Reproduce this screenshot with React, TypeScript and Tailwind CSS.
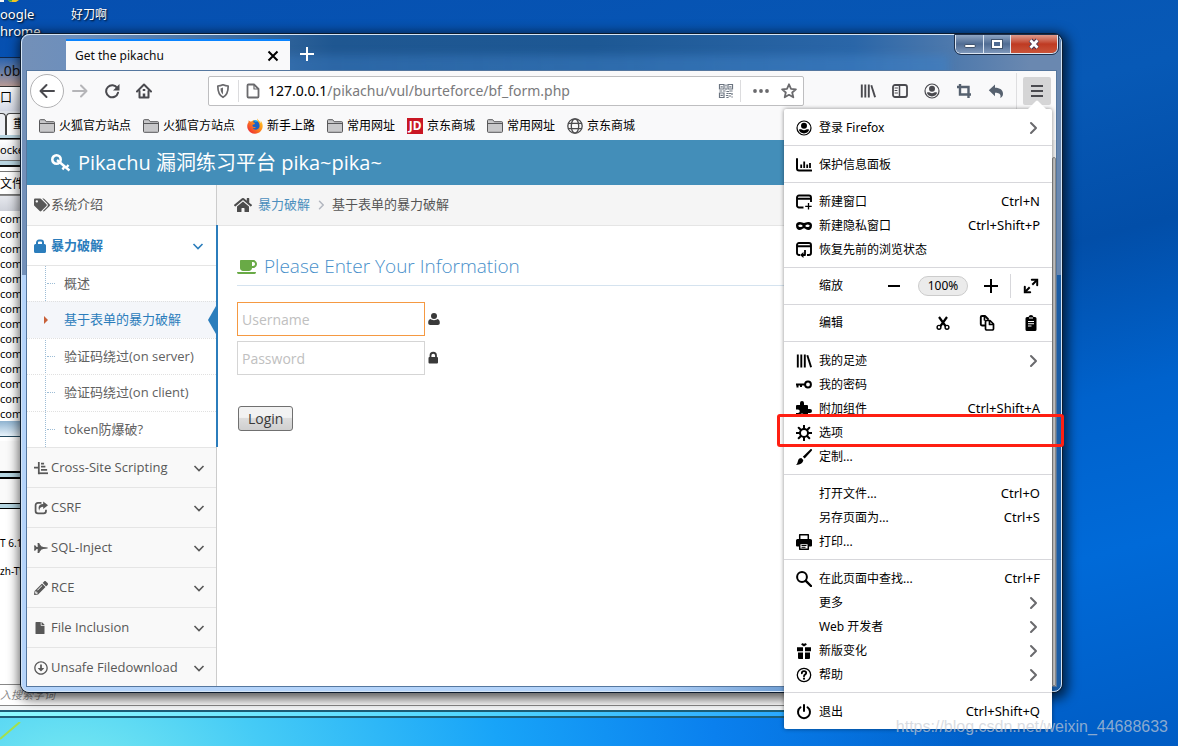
import React, { ReactNode } from "react";
import { FaCoffee, FaFighterJet, FaFile, FaHome, FaPencilAlt, FaRegArrowAltCircleDown, FaTags } from "react-icons/fa";

const UI = "font-['Noto_Sans','Noto_Sans_CJK_SC',sans-serif]";
const WEB = "font-['Open_Sans','Noto_Sans_CJK_SC',sans-serif]";

type IconProps = { children: ReactNode; className?: string };

function Icon({ children, className = "size-4" }: IconProps) {
  return (
    <svg viewBox="0 0 16 16" className={`shrink-0 ${className}`} fill="none" stroke="currentColor" strokeWidth="2" strokeLinecap="round" strokeLinejoin="round" aria-hidden="true">
      {children}
    </svg>
  );
}

const Account = ({ className }: { className?: string }) => (
  <Icon className={className}>
    <circle cx="8" cy="8" r="7" strokeWidth="1.2" />
    <circle cx="8" cy="5.8" r="3" fill="currentColor" stroke="none" />
    <path d="M2.8 9.8C4 9.2 5 9.3 5.8 9.6c1.3 1 3.1 1 4.4 0 .8-.3 1.8-.4 3 .2C12.400 12 10.500 13.400 8 13.400S3.600 12 2.800 9.800z" fill="currentColor" stroke="none" />
  </Icon>
);

const Library = ({ className }: { className?: string }) => (
  <Icon className={className}>
    <path d="M1.800 1.500v13M5.300 1.500v13M8.800 1.500v13" strokeLinecap="butt" strokeWidth="1.900" />
    <path d="M11.300 2.200l3.800 12" strokeLinecap="butt" strokeWidth="1.900" />
  </Icon>
);

const Chevron = ({ className = "size-4" }: { className?: string }) => (
  <Icon className={className}>
    <path d="M6 3l5 5-5 5" />
  </Icon>
);

const ChevronDown = () => (
  <Icon className="size-4">
    <path d="M3.500 6L8 10.500 12.500 6" strokeWidth="1.600" strokeLinecap="butt" strokeLinejoin="miter" />
  </Icon>
);

const Folder = () => (
  <svg viewBox="0 0 16 16" className="size-4 shrink-0" aria-hidden="true">
    <path d="M.5 13.500v-11a.8.8 0 0 1 .8-.8h4.400l1.500 2h7.500a.8.8 0 0 1 .8.8v9a.8.8 0 0 1-.8.8H1.300a.8.8 0 0 1-.8-.8z" fill="#c8c8ca" stroke="#58585a" />
    <path d="M1 5.500h14" stroke="#58585a" />
  </svg>
);

const FirefoxLogo = () => (
  <svg viewBox="0 0 16 16" className="size-4 shrink-0" aria-hidden="true">
    <defs>
      <linearGradient id="fx" x1="1" y1="0" x2="0" y2="1">
        <stop offset="0" stopColor="#ffd92e" />
        <stop offset=".4" stopColor="#ff9217" />
        <stop offset="1" stopColor="#e9173c" />
      </linearGradient>
    </defs>
    <circle cx="8" cy="8.500" r="6" fill="#1b62c4" />
    <path d="M6 2.400A6 6 0 0 1 12 4c-1-.6-2-.4-3 0z" fill="#20b4f0" />
    <path d="M1.800 2.300c-.4 1.200-.2 2-.2 2C.2 6-.2 8.500.8 11c1.200 3 4 4.700 7.200 4.700 4.300 0 7.700-3.300 7.700-7.700 0-2-.8-4.400-2.500-5.600.7 1.200 1 2 1 3C13 3.200 11 2.500 10.200.5c-.3 2 1 3.300 1.800 4.800 1 2 .7 4.200-.8 5.500-1.800 1.500-4.400 1-5.400-.7 1 .3 2.400 0 3.200-.8-.8-.5-1.400 0-2.300-.3-1-.3-1.500-1.300-1-2.200.3-.5 1.200-.3 1.600-.6.6-.6.7-1.200.7-1.200C7 4.600 6.300 4.500 6 4.300c.1-.8.6-1.500 1.300-2-1.300 0-2.400.6-3.100 1.500-.8-.2-1.700-.5-2.400-1.500z" fill="url(#fx)" />
  </svg>
);

const JDLogo = () => (
  <span className="flex size-4 shrink-0 items-center justify-center bg-[#c91623] text-xs font-bold text-white" aria-hidden="true">JD</span>
);

const Globe = () => (
  <Icon className="size-4 text-[#4c4c4e]">
    <g strokeWidth="1.300">
      <circle cx="8" cy="8" r="7.200" />
      <ellipse cx="8" cy="8" rx="3.700" ry="7.200" />
      <path d="M1.500 5.300h13M1.500 10.700h13" />
    </g>
  </Icon>
);

const bookmarks: { label: string; icon: ReactNode }[] = [
  { label: "火狐官方站点", icon: <Folder /> },
  { label: "火狐官方站点", icon: <Folder /> },
  { label: "新手上路", icon: <FirefoxLogo /> },
  { label: "常用网址", icon: <Folder /> },
  { label: "京东商城", icon: <JDLogo /> },
  { label: "常用网址", icon: <Folder /> },
  { label: "京东商城", icon: <Globe /> },
];

function BackgroundWindow() {
  return (
    <div className={`absolute bottom-7 left-0 right-[230px] top-[57px] flex flex-col overflow-hidden border-t border-[#10284c] bg-white text-xs text-black ${UI}`}>
      <div className="h-7 shrink-0 bg-linear-to-b from-[#2a63ad] via-[#6a7fa6] to-[#b99a94] text-sm leading-[26px] text-[#111]">.0be</div>
      <div className="h-[25px] shrink-0 border-t border-[#333] bg-linear-to-b from-white to-[#d5d9e6] leading-[22px]">口</div>
      <div className="flex h-6 shrink-0 items-end bg-[#dfe3ea]">
        <span className="h-[22px] w-1.5 rounded-tr border-r border-t border-[#444] bg-[#eef0f5]" />
        <span className="h-[22px] w-20 rounded-tl border-l border-t border-[#444] bg-white pl-1.5 pt-0.5">重</span>
      </div>
      <div className="h-1 shrink-0 border-b border-black bg-[#b8d4e0]" />
      <div className="h-[22px] shrink-0 border-y border-[#777] bg-linear-to-b from-white to-[#e2e4ea] text-[11px] leading-5">ocket</div>
      <div className="h-1.5 shrink-0 border-b-2 border-[#111] bg-[#b8d4e0]" />
      <div className="mt-1 h-6 shrink-0 border-y border-[#777] leading-6">文件</div>
      <div className="h-4 shrink-0 border-t border-[#888] bg-linear-to-b from-[#e6e8ee] to-[#cfd2da]" />
      <div className="shrink-0 text-[11px] leading-[15px]">
        {Array.from({ length: 14 }, (_, i) => (
          <div key={i}>com</div>
        ))}
      </div>
      <div className="h-4 shrink-0 border-b border-[#244a60] bg-linear-to-b from-[#8fb3d0] to-[#e9f4fc]" />
      <div className="mt-1 h-8 shrink-0 border-b-2 border-black bg-[#fafafa]" />
      <div className="h-1.5 shrink-0 border-b-2 border-black bg-[#b6d6e2]" />
      <div className="h-6 shrink-0 bg-[#fafafa]" />
      <div className="h-1.5 shrink-0 border-y border-black bg-[#b6d6e2]" />
      <div className="flex-1 overflow-hidden pt-5 text-[10px] leading-[28px]">
        <div>T 6.1</div>
        <div>zh-TW</div>
      </div>
      <div className="h-[22px] shrink-0 border-y border-[#888] text-[11px] italic leading-5 text-[#888]">入搜索字词</div>
      <div className="h-1 shrink-0 bg-[#f4f6f7]" />
      <div className="h-2 shrink-0 border-y-2 border-[#1c5e78] bg-linear-to-r from-[#8ffaff] via-[#52d6ff] to-[#1590ff]" />
    </div>
  );
}

function WindowControls() {
  return (
    <div className="flex h-[19px] overflow-hidden rounded-b-md border border-t-0 border-[#dbe6f3] outline outline-[#1c2f4c]">
      <button aria-label="最小化" className="flex w-7 items-center justify-center border-r border-[#dbe6f3] bg-linear-to-b from-[#8ea5c4] via-[#506c93] to-[#7f98bb]">
        <span className="mt-1 h-1 w-3 rounded-xs border border-[#41546f] bg-white" />
      </button>
      <button aria-label="最大化" className="flex w-[27px] items-center justify-center border-r border-[#dbe6f3] bg-linear-to-b from-[#8ea5c4] via-[#506c93] to-[#7f98bb]">
        <span className="h-2 w-2.5 border-2 border-white bg-[#506c93] outline outline-[#41546f]" />
      </button>
      <button aria-label="关闭" className="flex w-[46px] items-center justify-center bg-linear-to-b from-[#dd9a8c] via-[#bf3a22] to-[#c9543a]">
        <svg viewBox="0 0 12 12" className="size-3" aria-hidden="true">
          <path d="M2.500 2l7 8M9.500 2l-7 8" stroke="#4b3650" strokeWidth="4.800" />
          <path d="M2.500 2.300l7 7.400M9.500 2.300l-7 7.400" stroke="#fff" strokeWidth="2.800" />
        </svg>
      </button>
    </div>
  );
}

function TitleBar() {
  return (
    <div className="flex h-9 shrink-0 items-start">
      <div className="ml-11 mt-1 flex h-8 w-56 items-center justify-between border-t-2 border-[#0a84ff] bg-[#f9f9fa] pl-[9px] pr-[9px]">
        <span className="text-xs text-[#0c0c0d]">Get the pikachu</span>
        <button aria-label="关闭标签页">
          <Icon className="size-4 text-black">
            <path d="M3.500 3.500l9 9M12.500 3.500l-9 9" strokeLinecap="butt" />
          </Icon>
        </button>
      </div>
      <button aria-label="新建标签页" className="ml-[9px] mt-[11px] text-white">
        <Icon className="size-4">
          <path d="M8 1v14M1 8h14" strokeLinecap="butt" />
        </Icon>
      </button>
      <div className="ml-auto mr-[3px]">
        <WindowControls />
      </div>
    </div>
  );
}

function Toolbar() {
  return (
    <div className="flex h-10 shrink-0 items-center bg-[#f9f9fa] pl-[3px] pr-[5px] text-[#4a4a4f]">
      <button aria-label="后退" className="flex size-[34px] shrink-0 items-center justify-center rounded-full border border-[#b1b1b3] bg-white">
        <Icon className="size-4">
          <path d="M15 8H2M7.500 2L1.500 8l6 6" />
        </Icon>
      </button>
      <button aria-label="前进" className="ml-2 text-[#b5b5b8]">
        <Icon className="size-4">
          <path d="M1 8h13M9 2.500L14.500 8 9 13.500" />
        </Icon>
      </button>
      <button aria-label="重新载入" className="ml-4">
        <Icon className="size-4">
          <path d="M13.300 5.200A6 6 0 1 0 14 9.700" />
          <path d="M15.500 1v6.500H9z" fill="currentColor" stroke="none" />
        </Icon>
      </button>
      <button aria-label="主页" className="ml-4">
        <Icon className="size-4">
          <path d="M1 8.500L8 1.500l7 7" />
          <path d="M3.500 8v6.500h9V8" />
          <path d="M8 10.500v4M8 6v2" strokeWidth="2.500" strokeLinecap="butt" />
        </Icon>
      </button>
      <div className="ml-14 flex h-[30px] min-w-0 flex-1 items-center rounded-xs border border-[#bebec0] bg-white px-1.5 text-[#6a6a6d]">
        <Icon className="size-4">
          <path d="M8 1.800c2 .9 3.500 1.200 5.200 1.200 0 5-1 9.200-5.200 11.300C3.800 12.200 2.800 8 2.800 3 4.500 3 6 2.700 8 1.800z" strokeWidth="1.700" />
          <path d="M8 4.500v7c-1.700-1.300-2.500-3.500-2.500-6z" fill="currentColor" stroke="none" />
        </Icon>
        <span className="ml-[7px] h-[22px] w-px bg-[#dcdcde]" />
        <Icon className="ml-1.5 size-4">
          <path d="M2.500 2.500a1 1 0 0 1 1-1H9L13.500 6v7.500a1 1 0 0 1-1 1h-9a1 1 0 0 1-1-1z" strokeWidth="1.800" />
          <path d="M9 2v4h4" strokeWidth="1.200" />
        </Icon>
        <div className="ml-[7px] min-w-0 flex-1 truncate text-sm leading-5 text-[#7a7a7c]">
          <span className="text-black">127.0.0.1</span>/pikachu/vul/burteforce/bf_form.php
        </div>
        <Icon className="size-4 text-[#6b7480]">
          <g strokeWidth="1.200" strokeLinejoin="miter">
            <path d="M1.500 1.500h4.500V6H1.500zM10 1.500h4.500V6H10zM1.500 10H6v4.500H1.500z" />
            <path d="M3.200 3.800h1M11.800 3.800h1M3.200 12.300h1M8 2v1M8 5v1.500M2 8h1.500M5.500 8H7M9 8.500h1.500M12 8h2M9 10.500h1M11.500 10.500h1M14 10.500v1M8.500 12.500h1M11 13h1.500M14 14h.2M9 14.500h1" strokeLinecap="square" />
          </g>
        </Icon>
        <span className="ml-1.5 h-[22px] w-px bg-[#dcdcde]" />
        <Icon className="ml-3 size-4">
          <g fill="currentColor" stroke="none">
            <circle cx="2" cy="8" r="1.900" />
            <circle cx="8" cy="8" r="1.900" />
            <circle cx="14" cy="8" r="1.900" />
          </g>
        </Icon>
        <Icon className="ml-3 size-4">
          <path d="M8 1.300l2 4.500 4.900.5-3.700 3.200 1.100 4.800L8 11.800l-4.300 2.500 1.100-4.800L1.100 6.300 6 5.800z" strokeWidth="1.800" />
        </Icon>
      </div>
      <div className="ml-14 flex items-center gap-4">
        <Library />
        <Icon>
          <rect x="1" y="2" width="14" height="12" rx="2" strokeWidth="1.800" />
          <path d="M7.500 2v12" strokeWidth="1.500" />
          <path d="M3 5h2.500M3 7.500h2M3 10h2.500" strokeWidth="1" />
        </Icon>
        <Account />
        <Icon className="size-4 text-[#56616f]">
          <path d="M4 1v10.500h11M1 4h11.500v11" strokeWidth="2.400" strokeLinecap="butt" strokeLinejoin="miter" />
        </Icon>
        <Icon className="size-4 text-[#56616f]">
          <path d="M7 1.500v3.200c5 0 8 2.300 8 6 0 2-.9 3.500-2.700 4.300C13.300 12 12 9.800 7 9.800v3.400L.8 7.300z" fill="currentColor" stroke="none" />
        </Icon>
      </div>
      <span className="ml-3 h-9 w-px bg-[#dedee0]" />
      <button aria-label="打开菜单" className="ml-1.5 flex size-7 items-center justify-center rounded-xs bg-[#d5d5d6]">
        <Icon>
          <path d="M2 3h12M2 8h12M2 13h12" strokeLinecap="butt" />
        </Icon>
      </button>
    </div>
  );
}

function BookmarksBar() {
  return (
    <nav aria-label="书签" className="flex h-[29px] shrink-0 items-center gap-3 bg-[#f9f9fa] pl-3 text-xs text-black">
      {bookmarks.map((b, i) => (
        <a key={i} href="#" className="flex shrink-0 items-center gap-1">
          {b.icon}
          {b.label}
        </a>
      ))}
    </nav>
  );
}

const subItems = ["概述", "基于表单的暴力破解", "验证码绕过(on server)", "验证码绕过(on client)", "token防爆破?"];

const navItems: { label: string; icon: ReactNode }[] = [
  {
    label: "Cross-Site Scripting",
    icon: (
      <Icon className="size-3.5">
        <path d="M5.500 1v14M0 7.500h5M8 3h3.500M8 6.500h5M8 10h7" strokeLinecap="butt" />
        <path d="M5.500 14h10.500" strokeLinecap="butt" />
      </Icon>
    ),
  },
  {
    label: "CSRF",
    icon: (
      <Icon className="size-3.5">
        <path d="M8.500 2.200H4.500A2.700 2.700 0 0 0 1.800 5v6.500a2.700 2.700 0 0 0 2.700 2.700H11a2.700 2.700 0 0 0 2.700-2.700V10" strokeLinecap="butt" />
        <path d="M10.500.5L16 4.800l-5.500 4.300V6.500C8 6.500 6.500 7.500 6 11 4 6.500 6 3.300 10.500 3.300z" fill="currentColor" stroke="none" />
      </Icon>
    ),
  },
  { label: "SQL-Inject", icon: <FaFighterJet className="size-3.5" /> },
  { label: "RCE", icon: <FaPencilAlt className="size-3.5" /> },
  { label: "File Inclusion", icon: <FaFile className="size-3" /> },
  { label: "Unsafe Filedownload", icon: <FaRegArrowAltCircleDown className="size-3.5" /> },
];

function Sidebar() {
  return (
    <aside className="flex w-[190px] shrink-0 flex-col border-r border-[#ccc] bg-[#f2f2f2] text-[13px] text-[#585858]">
      <a href="#" className="flex h-10 shrink-0 items-center gap-px bg-[#f9f9f9] pl-[7px]">
        <FaTags className="size-4" />
        系统介绍
      </a>
      <div className="relative z-10 -mr-0.5 shrink-0 border-r-2 border-[#2b7dbc] bg-white">
        <a href="#" className="flex h-[41px] items-center gap-[3px] border-y border-[#e5e5e5] pl-[7px] pr-2.5 font-bold text-[#2b7dbc]">
          <svg viewBox="0 0 14 14" className="h-3.5 w-3.5" fill="currentColor" aria-hidden="true">
            <path d="M1.500 5h9a1.500 1.500 0 0 1 1.500 1.500v6A1.500 1.500 0 0 1 10.500 14h-9A1.500 1.500 0 0 1 0 12.500v-6A1.500 1.500 0 0 1 1.500 5z" />
            <path d="M3 6V3.500A2 2 0 0 1 5 1.500h2a2 2 0 0 1 2 2V6" fill="none" stroke="currentColor" strokeWidth="2" />
          </svg>
          <span className="flex-1">暴力破解</span>
          <ChevronDown />
        </a>
        <ul className="relative flex h-[181px] flex-col before:absolute before:inset-y-0 before:left-[18px] before:border-l before:border-dotted before:border-[#9dbdd6]">
          {subItems.map((label, i) => {
            const active = i === 1;
            return (
              <li key={label} className={`relative flex flex-1 items-center ${i > 0 ? "border-t border-dotted border-[#e0e0e0]" : ""} ${active ? "bg-[#f4f6fa] text-[#2b7dbc]" : "text-[#616161]"}`}>
                {active ? (
                  <>
                    <svg viewBox="0 0 4 8" className="absolute left-[17px] z-10 h-2 w-1" aria-hidden="true">
                      <path d="M0 0l4 4-4 4z" fill="#c86139" />
                    </svg>
                    <svg viewBox="0 0 8 28" className="absolute right-0 h-7 w-2" aria-hidden="true">
                      <path d="M8 0v28L0 14z" fill="#2b7dbc" />
                    </svg>
                  </>
                ) : (
                  <span className="absolute left-5 w-2 border-t border-dotted border-[#9dbdd6]" />
                )}
                <a href="#" className="pl-[37px]">{label}</a>
              </li>
            );
          })}
        </ul>
      </div>
      {navItems.map((item) => (
        <a key={item.label} href="#" className="flex h-10 shrink-0 items-center border-t border-[#e5e5e5] bg-[#f9f9f9] pl-[7px] pr-[9px]">
          <span className="flex w-[17px] shrink-0">{item.icon}</span>
          <span className="flex-1 whitespace-nowrap">{item.label}</span>
          <ChevronDown />
        </a>
      ))}
    </aside>
  );
}

function LoginForm() {
  const field = "block h-[34px] w-[188px] border bg-white px-1 text-sm text-[#858585] outline-none placeholder:text-[#c0c0c0]";
  return (
    <form className="px-5 pt-6" onSubmit={(e) => e.preventDefault()}>
      <h4 className="flex h-9 items-center gap-[7px] border-b border-[#d5e3ef] pb-0.5 text-[19px] font-light text-[#478fca]">
        <FaCoffee className="size-5 text-[#69aa46]" />
        Please Enter Your Information
      </h4>
      <div className="mt-4 flex items-center gap-[3px]">
        <input id="username" type="text" placeholder="Username" className={`${field} border-[#f59942]`} />
        <label htmlFor="username" aria-label="Username" className="text-[#393939]">
          <svg viewBox="0 0 12 14" className="h-3.5 w-3" fill="currentColor" aria-hidden="true">
            <circle cx="6" cy="4" r="3" />
            <path d="M2.500 7C4 8.500 8 8.500 9.500 7c1.500.3 2.300 1.500 2.300 4 0 1.300-.8 2-2 2H2.200c-1.200 0-2-.7-2-2 0-2.500.8-3.700 2.300-4z" />
          </svg>
        </label>
      </div>
      <div className="mt-[5px] flex items-center gap-[3px]">
        <input id="password" type="password" placeholder="Password" className={`${field} border-[#d5d5d5]`} />
        <label htmlFor="password" aria-label="Password" className="text-[#393939]">
          <svg viewBox="0 0 12 14" className="h-3.5 w-3" fill="currentColor" aria-hidden="true">
            <path d="M1.500 6h7.500a1 1 0 0 1 1 1v4.500a1 1 0 0 1-1 1H1.500a1 1 0 0 1-1-1V7a1 1 0 0 1 1-1z" />
            <path d="M2.500 7V4.500a2.700 2.700 0 0 1 5.500 0V7" fill="none" stroke="currentColor" strokeWidth="1.800" />
          </svg>
        </label>
      </div>
      <button type="submit" className="ml-px mt-[31px] flex h-[25px] items-center rounded-[3px] border border-[#707070] bg-linear-to-b from-[#f2f2f2] from-45% via-[#dddddd] via-50% to-[#cfcfcf] px-[9px] text-sm text-[#393939]">
        Login
      </button>
    </form>
  );
}

function Page() {
  return (
    <div className={`flex min-h-0 flex-1 ${WEB}`}>
      <div className="flex min-w-0 flex-1 flex-col overflow-hidden bg-white">
        <header className="flex h-[45px] shrink-0 items-center gap-[7px] bg-[#438eb9] pl-6 text-xl text-white">
          <svg viewBox="0 0 20 20" className="size-5" fill="none" stroke="currentColor" aria-hidden="true">
            <circle cx="5.500" cy="6.500" r="4.200" strokeWidth="2.600" />
            <path d="M6 7l12.500 10.500M13.500 13.500l-2 3M17.500 12l-2.500 3" strokeWidth="2.300" />
          </svg>
          Pikachu 漏洞练习平台 pika~pika~
        </header>
        <div className="flex min-h-0 flex-1">
          <Sidebar />
          <main className="min-w-0 flex-1">
            <nav className="flex h-[41px] items-center border-b border-[#e5e5e5] bg-[#f5f5f5] pl-[17px] text-[13px]">
              <FaHome className="mr-1.5 size-[18px] text-[#4c4c4c]" />
              <a href="#" className="text-[#4c8fbd]">暴力破解</a>
              <Icon className="mx-[5px] size-3 text-[#b2b6bf]">
                <path d="M6 3l5 5-5 5" />
              </Icon>
              <span className="text-[#555]">基于表单的暴力破解</span>
            </nav>
            <LoginForm />
          </main>
        </div>
      </div>
      <div className="w-1 shrink-0 bg-[#ededed] pt-[17px]">
        <div className="h-full rounded-t-xs border border-[#8d8d8d] bg-[#c6c6c6]" />
      </div>
    </div>
  );
}

type Item = { label: string; icon?: ReactNode; keys?: string; arrow?: boolean; marked?: boolean };

const windowGlyph = (
  <path d="M7.500 13.500H3a2 2 0 0 1-2-2V3.500a2 2 0 0 1 2-2h10a2 2 0 0 1 2 2V8M1.500 4.800h13" strokeWidth="1.900" strokeLinecap="butt" />
);

const groupA: Item[][] = [
  [{ label: "登录 Firefox", icon: <Account />, arrow: true }],
  [
    {
      label: "保护信息面板",
      icon: (
        <Icon>
          <path d="M1 2v9.500a2 2 0 0 0 2 2h12.200" />
          <path d="M5.200 7.500v3.500M8.200 4.500V11M11.200 7.500V11M14 6v5" strokeLinecap="butt" strokeWidth="1.800" />
        </Icon>
      ),
    },
  ],
  [
    {
      label: "新建窗口",
      keys: "Ctrl+N",
      icon: (
        <Icon>
          {windowGlyph}
          <path d="M12.500 9v6.500M9.200 12.300h6.500" strokeWidth="1.300" strokeLinecap="butt" />
        </Icon>
      ),
    },
    {
      label: "新建隐私窗口",
      keys: "Ctrl+Shift+P",
      icon: (
        <Icon>
          <path fillRule="evenodd" d="M3.800 4C5.800 4 6.800 5 8 5s2.200-1 4.200-1C14.800 4 16 5.300 16 7.500c0 2.800-1.500 4.500-3.600 4.500C10.500 12 9.300 10.200 8 10.200S5.500 12 3.600 12C1.500 12 0 10.300 0 7.500 0 5.300 1.200 4 3.800 4zM4.300 6.500c-1.300 0-2 .8-2 1.300s.8 1.300 2 1.300 2.300-.7 2.300-1.200-1-1.400-2.300-1.400zm7.400 0c-1.300 0-2.300.9-2.300 1.400s1.100 1.200 2.300 1.200 2-.8 2-1.300-.7-1.300-2-1.300z" fill="currentColor" stroke="none" />
        </Icon>
      ),
    },
    {
      label: "恢复先前的浏览状态",
      icon: (
        <Icon>
          <path d="M4 13H3a2 2 0 0 1-2-2V3a2 2 0 0 1 2-2h10a2 2 0 0 1 2 2v8a2 2 0 0 1-2 2h-2M1.500 4.300h13" strokeWidth="1.900" strokeLinecap="butt" />
          <path d="M9 8v5H6" strokeWidth="1.800" strokeLinecap="butt" />
          <path d="M7.500 10v6L4 13z" fill="currentColor" stroke="none" />
        </Icon>
      ),
    },
  ],
];

const groupB: Item[][] = [
  [
    { label: "我的足迹", icon: <Library />, arrow: true },
    {
      label: "我的密码",
      icon: (
        <Icon>
          <circle cx="12" cy="7.500" r="2.900" />
          <path d="M9 7.500H0M1.500 7.500v3M5 7.500v2.500" strokeLinecap="butt" />
        </Icon>
      ),
    },
    {
      label: "附加组件",
      keys: "Ctrl+Shift+A",
      icon: (
        <Icon>
          <path d="M6 0a2 2 0 0 1 2 2v2h3a1 1 0 0 1 1 1v3h2a2 2 0 1 1 0 4h-2v3a1 1 0 0 1-1 1H8v-1.500a2 2 0 0 0-4 0V16H1a1 1 0 0 1-1-1v-3h2a1.700 1.700 0 0 0 0-3.500H0V5a1 1 0 0 1 1-1h3V2a2 2 0 0 1 2-2z" fill="currentColor" stroke="none" />
        </Icon>
      ),
    },
    {
      label: "选项",
      marked: true,
      icon: (
        <Icon>
          <circle cx="8" cy="8" r="4" />
          <path d="M8 .5v3M8 12.500v3M.5 8h3M12.500 8h3M2.700 2.700l2 2M11.300 11.300l2 2M13.300 2.700l-2 2M4.700 11.300l-2 2" />
        </Icon>
      ),
    },
    {
      label: "定制...",
      icon: (
        <Icon>
          <path d="M15.700.3c.5.500.4 1.100 0 1.500L8.700 9.500 6.800 7.700 14.200.4c.500-.5 1.100-.5 1.500-.1zM5.300 9l2 2c-.3 2.800-2.600 4.600-7.300 5 1.500-1.500 1.500-2.600 2.100-4.600C2.700 9.800 3.800 9 5.300 9z" fill="currentColor" stroke="none" />
        </Icon>
      ),
    },
  ],
  [
    { label: "打开文件...", keys: "Ctrl+O" },
    { label: "另存页面为...", keys: "Ctrl+S" },
    {
      label: "打印...",
      icon: (
        <Icon>
          <path d="M3.700 6V.8h8.600V6" strokeWidth="1.500" />
          <path d="M1.500 5h13A1.500 1.500 0 0 1 16 6.500v5a1 1 0 0 1-1 1h-2V9H3v3.500H1a1 1 0 0 1-1-1v-5A1.500 1.500 0 0 1 1.500 5z" fill="currentColor" stroke="none" />
          <path d="M3.700 9.500h8.600v5.700H3.700z" strokeWidth="1.500" />
          <path d="M5.500 11.500h5M5.500 13.300h4" strokeWidth="1" strokeLinecap="butt" />
        </Icon>
      ),
    },
  ],
  [
    {
      label: "在此页面中查找...",
      keys: "Ctrl+F",
      icon: (
        <Icon>
          <circle cx="6" cy="6" r="4.900" />
          <path d="M9.800 9.800l5.200 5.200" strokeWidth="2.400" />
        </Icon>
      ),
    },
    { label: "更多", arrow: true },
    { label: "Web 开发者", arrow: true },
    {
      label: "新版变化",
      arrow: true,
      icon: (
        <Icon>
          <path d="M1 4.200h6v4H1zM9 4.200h6v4H9zM2 9.500h5V16H3a1 1 0 0 1-1-1zM9 9.500h5V15a1 1 0 0 1-1 1H9zM8 3.500L5.300 1.700C5.300 0 7.300-.3 8 1c.7-1.300 2.700-1 2.700.7z" fill="currentColor" stroke="none" />
        </Icon>
      ),
    },
    {
      label: "帮助",
      arrow: true,
      icon: (
        <Icon>
          <circle cx="8" cy="8" r="6.700" strokeWidth="1.300" />
          <path d="M5.800 6.300C5.800 4.800 6.800 4.200 8 4.200s2.200.8 2.200 1.900c0 1.500-2.200 1.500-2.200 3.100" strokeWidth="1.800" />
          <circle cx="8" cy="11.700" r="1.100" fill="currentColor" stroke="none" />
        </Icon>
      ),
    },
  ],
  [
    {
      label: "退出",
      keys: "Ctrl+Shift+Q",
      icon: (
        <Icon>
          <path d="M4.500 3.300a6 6 0 1 0 7 0M8 1v6" />
        </Icon>
      ),
    },
  ],
];

function MenuGroup({ items }: { items: Item[] }) {
  return (
    <div className="border-b border-[#d7d7db] pb-[5px] pt-[7px] last:border-b-0">
      {items.map((item) => (
        <button key={item.label} className="relative flex h-6 w-full items-center pl-3 pr-3 text-left">
          <span className="mr-[7px] flex size-4 shrink-0">{item.icon}</span>
          <span className="flex-1">{item.label}</span>
          {item.keys && <span className="text-[13px]">{item.keys}</span>}
          {item.arrow && <Chevron className="-mr-px size-4 text-[#6a6a6d]" />}
          {item.marked && <span className="absolute -bottom-0.5 -left-[7px] -right-3 -top-[7px] z-10 rounded-[3px] border-3 border-[#ff1f12]" />}
        </button>
      ))}
    </div>
  );
}

function AppMenu() {
  return (
    <div className={`absolute right-[126px] top-[109px] w-[268px] rounded-xs bg-white text-xs text-black shadow-[0_0_4px_rgba(0,0,0,0.45)] ${UI}`}>
      <svg viewBox="0 0 20 10" className="absolute -top-[9px] right-[5px] h-2.5 w-5" aria-hidden="true">
        <path d="M0 10L9 1q1-1 2 0l9 9z" fill="#fff" />
      </svg>
      {groupA.map((g, i) => (
        <MenuGroup key={i} items={g} />
      ))}
      <div className="flex h-[37px] items-center border-b border-[#d7d7db] pl-[35px] pr-[13px]">
        <span className="flex-1">缩放</span>
        <button aria-label="缩小">
          <Icon>
            <path d="M2 8h12" strokeLinecap="butt" />
          </Icon>
        </button>
        <button className="ml-4 h-5 w-[50px] rounded-full border border-[#ccc] bg-[#ebebeb] leading-none">100%</button>
        <button aria-label="放大" className="ml-[15px]">
          <Icon>
            <path d="M8 1v14M1 8h14" strokeLinecap="butt" />
          </Icon>
        </button>
        <span className="ml-[11px] h-6 w-px bg-[#d7d7db]" />
        <button aria-label="全屏" className="ml-3">
          <Icon>
            <path d="M13.500 2.500L9.300 6.700M2.500 13.500l4.200-4.200" strokeLinecap="butt" />
            <path d="M8.800 1.800h5.400v5.400M1.800 8.800v5.400h5.400" strokeLinejoin="miter" />
          </Icon>
        </button>
      </div>
      <div className="flex h-[37px] items-center border-b border-[#d7d7db] pl-[35px] pr-[13px]">
        <span className="flex-1">编辑</span>
        <div className="flex gap-7">
          <button aria-label="剪切">
            <Icon>
              <circle cx="4" cy="12.300" r="1.900" strokeWidth="1.400" />
              <circle cx="12" cy="12.300" r="1.900" strokeWidth="1.400" />
              <path d="M4 2l6.500 9M12 2L5.500 11" strokeWidth="2.200" strokeLinecap="butt" />
            </Icon>
          </button>
          <button aria-label="复制">
            <Icon>
              <path d="M5.500 10.500H3a1.200 1.200 0 0 1-1.200-1.200V2.200A1.200 1.200 0 0 1 3 1h3l3 3" strokeWidth="1.900" />
              <path d="M6.500 6.700a1.200 1.200 0 0 1 1.200-1.200H11l3.500 3.500v4.800a1.200 1.200 0 0 1-1.200 1.200H7.700a1.200 1.200 0 0 1-1.200-1.200zM10.500 6v3.500H14M5.500 1.500V5" strokeWidth="1.700" />
            </Icon>
          </button>
          <button aria-label="粘贴">
            <Icon>
              <path d="M4 2h1.500a2.600 2.600 0 0 1 5 0H12a1.500 1.500 0 0 1 1.500 1.500v11A1.500 1.500 0 0 1 12 16H4a1.500 1.500 0 0 1-1.500-1.500v-11A1.500 1.500 0 0 1 4 2z" fill="currentColor" stroke="none" />
              <path d="M6 3h4M5 6.500h6M5 8.700h6M5 11h3.500" stroke="#fff" strokeWidth="1.100" strokeLinecap="butt" />
            </Icon>
          </button>
        </div>
      </div>
      {groupB.map((g, i) => (
        <MenuGroup key={i} items={g} />
      ))}
    </div>
  );
}

export default function App() {
  return (
    <div className="relative h-screen min-h-[746px] w-full overflow-hidden bg-[radial-gradient(ellipse_900px_620px_at_6%_105%,#7cecf0_0%,#45cbf6_22%,#18a4f8_48%,#0a80ee_72%,transparent_100%),linear-gradient(165deg,#064fb0_0%,#0759b6_35%,#024ea8_50%,#0062cc_65%,#006ad8_80%,#005cc4_100%)]">
      <svg viewBox="0 0 24 24" className="absolute bottom-0 left-0 size-6" aria-hidden="true">
        <path d="M0 17L20 0" stroke="#a4e04a" strokeWidth="2" />
      </svg>
      <svg viewBox="0 0 20 4" className="absolute left-0 top-0 h-1 w-5" aria-hidden="true">
        <path d="M0 0h4v2H0z" fill="#f4f4f4" />
        <path d="M8 0h11l-3 2h-6z" fill="#f2c321" />
        <path d="M8 0h4v1.500H9z" fill="#3fa646" />
      </svg>
      <div className={`absolute left-0 top-1.5 text-[13px] leading-[17px] text-white [text-shadow:1px_1px_2px_#000] ${UI}`}>
        <div>oogle</div>
        <div>hrome</div>
      </div>
      <div className={`absolute left-[71px] top-1.5 text-xs leading-[17px] text-white [text-shadow:1px_1px_2px_#000] ${UI}`}>好刀啊</div>

      <BackgroundWindow />

      <div className={`absolute bottom-[54px] left-[21px] right-[116px] top-[34px] flex flex-col rounded-lg border border-[#d5e5f5] bg-[linear-gradient(90deg,#b5d4fa_0%,#b5d4fa_60%,#1b5ca3_90%)] shadow-[0_0_0_1px_#0c1c30,2px_3px_12px_4px_rgba(0,0,0,0.65)] ${UI}`}>
        <div className="absolute inset-x-0 top-0 h-60 overflow-hidden rounded-t-lg bg-[linear-gradient(90deg,#7390b8_0%,#6d8fbc_5%,#1f5791_30%,#1d5894_55%,#2a66a8_80%,#6a88b0_97%)]">
          <div className="ml-[10%] mr-28 mt-5 h-6 bg-linear-to-r from-[#3a78c0]/40 to-[#3f80c4]/60 blur-xs" />
        </div>
        <div className="relative flex min-h-0 flex-1 flex-col">
          <TitleBar />
          <div className="mx-[5px] mb-[5px] flex min-h-0 flex-1 flex-col outline outline-[#55779f]">
            <Toolbar />
            <BookmarksBar />
            <Page />
          </div>
        </div>
      </div>

      <AppMenu />

      <div className="pointer-events-none absolute bottom-[7px] right-2.5 font-['Liberation_Sans',sans-serif] text-base leading-6 text-[#c8ccd4]/70">
        https://blog.csdn.net/weixin_44688633
      </div>
    </div>
  );
}
